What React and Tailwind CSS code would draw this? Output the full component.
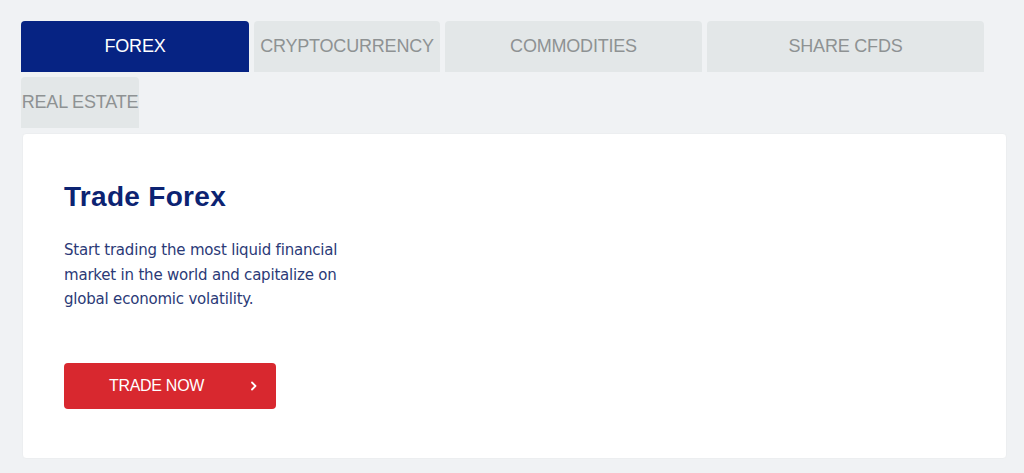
import React from 'react';

const tabs = [
  { label: 'FOREX', w: 'w-[228px]', active: true },
  { label: 'CRYPTOCURRENCY', w: 'w-[186px]' },
  { label: 'COMMODITIES', w: 'w-[257px]' },
  { label: 'SHARE CFDS', w: 'w-[277px]' },
  { label: 'REAL ESTATE', w: 'w-[118px]' },
];

const App = () => {
  return (
    <div className="min-h-screen bg-[#f0f2f4] pt-[21px] px-[21px]" style={{ fontFamily: '"Liberation Sans", Arial, sans-serif' }}>
      <div className="flex flex-wrap gap-[5px] w-[970px]">
        {tabs.map((t) => (
          <div
            key={t.label}
            className={`${t.w} h-[51px] rounded-t-[4px] flex items-center justify-center whitespace-nowrap text-[18px] tracking-[-0.2px] ${
              t.active ? 'bg-[#062383] text-white' : 'bg-[#e3e7e8] text-[#8e9293]'
            }`}
          >
            {t.label}
          </div>
        ))}
      </div>

      <div className="mt-[5px] ml-px w-[985px] h-[326px] bg-white rounded-[4px] border border-[#eceef0] pl-[41px] pt-[45px]">
        <h2 className="text-[28px] font-bold text-[#0c2372] leading-[36px] tracking-[0.3px]">Trade Forex</h2>
        <p
          className="mt-[23px] w-[290px] text-[15px] leading-[24.5px] text-[#2b3a77] tracking-[-0.2px]"
          style={{ fontFamily: '"DejaVu Sans", sans-serif' }}
        >
          Start trading the most liquid financial market in the world and capitalize on global economic volatility.
        </p>
        <button className="mt-[51px] w-[212px] h-[46px] bg-[#d8282f] rounded-[4px] text-white text-[16px] flex items-center pl-[45px] pr-[18px]">
          <span className="tracking-[-0.3px]">TRADE NOW</span>
          <svg className="ml-auto" width="9" height="10" viewBox="0 0 9 10" fill="none">
            <path d="M3 1.5 L6.5 5 L3 8.5" stroke="white" strokeWidth="1.8" strokeLinecap="round" strokeLinejoin="round" />
          </svg>
        </button>
      </div>
    </div>
  );
};

export default App;
